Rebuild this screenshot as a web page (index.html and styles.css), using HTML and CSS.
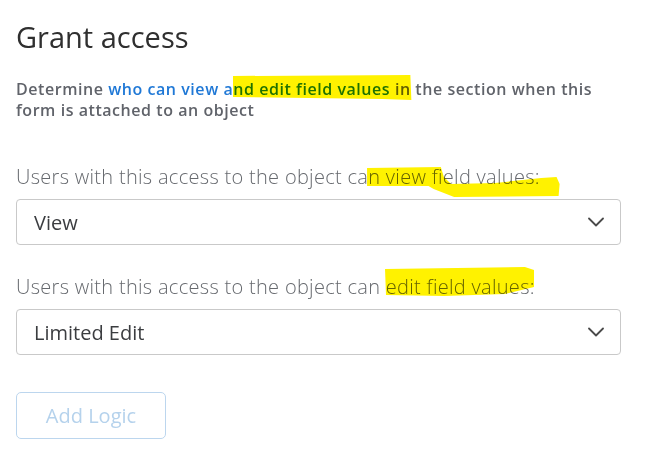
FILE: index.html
```html
<!DOCTYPE html>
<html lang="en">
<head>
<meta charset="utf-8">
<title>Grant access</title>
<link rel="stylesheet" href="styles.css">
</head>
<body>
<main class="panel">
  <h1 class="title">Grant access</h1>
  <p class="desc">Determine <span class="link">who can view a</span><span class="mark-wrap"><span class="link">nd edit field values</span> in<svg class="marker marker-desc" viewBox="0 0 180 25" preserveAspectRatio="none" aria-hidden="true"><path d="M1 1 L178 0 L179 25 L150 24 L1 22 Z"/></svg></span> the section when this form is attached to an object</p>

  <div class="field">
    <label class="label">Users with this access to the object ca<span class="mark-wrap">n view field values:<svg class="marker marker-view" viewBox="0 0 192 34" preserveAspectRatio="none" aria-hidden="true"><path d="M2 3 L74 2 L77 12 L84 19 L127 18 L172 13 L187 12 L190 19 L189 31 L87 32 L67 24 L62 21 L2 21 Z"/></svg></span></label>
    <div class="select">
      <span class="value">View</span>
      <svg class="chev" viewBox="0 0 16 10" aria-hidden="true"><path d="M1 1.5 L8 8.5 L15 1.5"/></svg>
    </div>
  </div>

  <div class="field">
    <label class="label">Users with this access to the object can <span class="mark-wrap">edit field values:<svg class="marker marker-edit" viewBox="0 0 150 30" preserveAspectRatio="none" aria-hidden="true"><path d="M1 2 L140 0 L149 3 L149 20 L120 27 L60 29 L2 28 Z"/></svg></span></label>
    <div class="select">
      <span class="value">Limited Edit</span>
      <svg class="chev" viewBox="0 0 16 10" aria-hidden="true"><path d="M1 1.5 L8 8.5 L15 1.5"/></svg>
    </div>
  </div>

  <button class="btn" type="button" disabled>Add Logic</button>
</main>
</body>
</html>
```

FILE: styles.css
```css
html, body {
  margin: 0;
  padding: 0;
  background: #ffffff;
}

body {
  font-family: "Open Sans", "Liberation Sans", sans-serif;
  color: #333333;
}

.panel {
  width: 605px;
  padding: 19px 16px 0 16px;
  display: flex;
  flex-direction: column;
}

.title {
  margin: 0;
  font-size: 29px;
  line-height: 36px;
  font-weight: 400;
  color: #2f2f2f;
}

.desc {
  margin: 24px 0 0 0;
  font-size: 16px;
  line-height: 21px;
  font-weight: 600;
  letter-spacing: 0.55px;
  color: #60636a;
}

.link {
  color: #1f78d6;
}

.field {
  display: flex;
  flex-direction: column;
  gap: 10px;
  margin-top: 44px;
}

.field + .field {
  margin-top: 30px;
}

.label {
  font-size: 20px;
  line-height: 24px;
  font-weight: 300;
  letter-spacing: 0.3px;
  color: #66696e;
}

.mark-wrap {
  position: relative;
}

.marker {
  position: absolute;
  fill: #fff200;
  mix-blend-mode: multiply;
  pointer-events: none;
}

.marker-desc {
  left: -1px;
  top: -3px;
  width: calc(100% + 3px);
  height: 25px;
}

.marker-view {
  left: -3px;
  top: 2px;
  width: calc(100% + 25px);
  height: 34px;
}

.marker-edit {
  left: -2px;
  top: -6px;
  width: calc(100% + 2px);
  height: 30px;
}

.select {
  height: 44px;
  border: 1px solid #c9c9c9;
  border-radius: 4px;
  display: flex;
  align-items: center;
  justify-content: space-between;
  padding: 0 16px 0 17px;
}

.value {
  font-size: 20px;
  font-weight: 400;
  color: #3b3d40;
}

.chev {
  width: 16px;
  height: 10px;
  fill: none;
  stroke: #4a4a4a;
  stroke-width: 1.8;
  stroke-linecap: round;
  stroke-linejoin: round;
}

.btn {
  align-self: flex-start;
  margin-top: 37px;
  width: 150px;
  height: 47px;
  border: 1px solid #bcd6ee;
  border-radius: 5px;
  background: #ffffff;
  font-family: inherit;
  font-size: 20px;
  font-weight: 400;
  color: #b5d2ec;
  padding: 0;
}
```
